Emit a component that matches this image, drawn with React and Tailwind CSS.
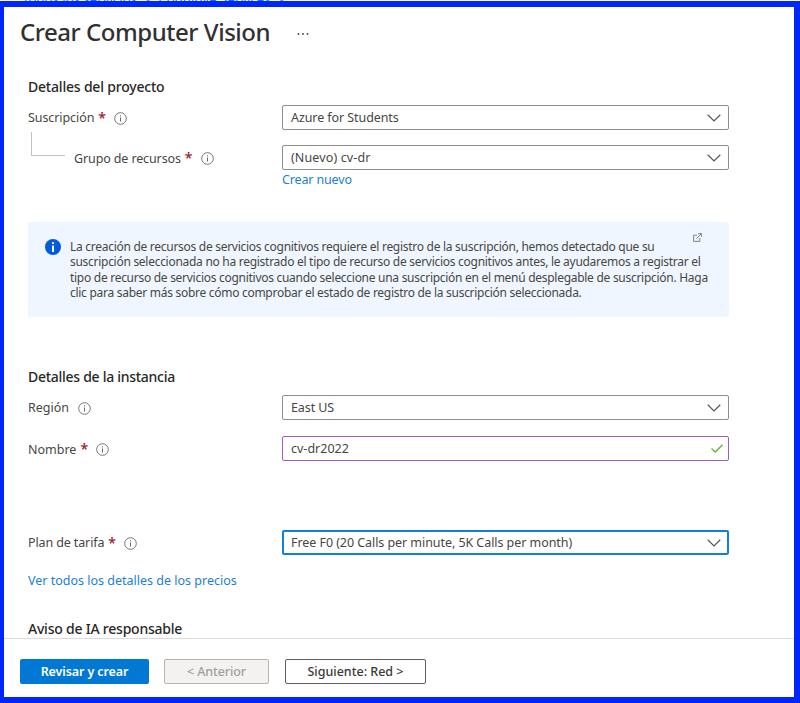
import React from "react";

function InfoIcon() {
  return (
    <svg className="block h-[13px] w-[13px] shrink-0" viewBox="0 0 13 13" fill="none" stroke="#666" aria-hidden="true">
      <circle cx="6.5" cy="6.5" r="5.8" strokeWidth="0.9" />
      <path d="M6.5 5.5v4M6.5 3.4v1.1" strokeWidth="1" />
    </svg>
  );
}

function Chevron() {
  return (
    <svg className="block h-2 w-[14px] shrink-0" viewBox="0 0 14 8" fill="none" stroke="#555" strokeWidth="1.2" aria-hidden="true">
      <path d="M0.7 0.8 7 7 13.3 0.8" />
    </svg>
  );
}

function Label({ text, spacing = "", required, className = "" }) {
  return (
    <div className={"flex h-[25px] items-center whitespace-nowrap " + className}>
      <span className={spacing}>{text}</span>
      {required && <span className="mb-px ml-1 w-[6px] text-[14px] font-semibold text-[#a4262c]">*</span>}
      <span className={required ? "ml-[10px]" : "ml-[9px]"}>
        <InfoIcon />
      </span>
    </div>
  );
}

function Select({ value, spacing = "", active }) {
  return (
    <button
      className={
        "flex h-[25px] w-[447px] shrink-0 items-center justify-between rounded-[2px] bg-white text-left " +
        (active ? "border-2 border-[#1080d8] pr-[6px] pl-[7px]" : "border border-[#8f8e8d] pr-[7px] pl-2")
      }
    >
      <span className={"whitespace-nowrap pt-px " + spacing}>{value}</span>
      <Chevron />
    </button>
  );
}

function Heading({ children, spacing }) {
  return <h2 className={"flex h-5 shrink-0 items-center whitespace-nowrap text-[14px] font-medium text-[#292827] " + spacing}>{children}</h2>;
}

export default function App() {
  return (
    <div className="flex h-[703px] w-[800px] flex-col overflow-hidden bg-white font-['Noto_Sans','Open_Sans',sans-serif] text-[12.5px] leading-4 text-[#484644]">
      <div className="flex h-px shrink-0 items-end overflow-hidden pl-[22px] text-[13px] tracking-[0.1px] whitespace-nowrap text-[#0078d4]">
        <span className="mb-[-6px]">Todos los servicios &nbsp;&gt;&nbsp; Cognitive Services &nbsp;&gt;</span>
      </div>
      <div className="flex h-[702px] flex-col border-t-[6px] border-r-[6px] border-b-[6px] border-l-4 border-[#0026ff]">
        <header className="flex h-[50px] shrink-0 items-center pl-4">
          <h1 className="w-[277px] text-[24px] leading-8 font-[550] tracking-[-0.46px] whitespace-nowrap text-[#323130]">Crear Computer Vision</h1>
          <svg className="mt-[3px] h-1 w-3" viewBox="0 0 12 4" fill="#484644" aria-hidden="true">
            <circle cx="1.5" cy="2" r="0.9" />
            <circle cx="6" cy="2" r="0.9" />
            <circle cx="10.5" cy="2" r="0.9" />
          </svg>
        </header>

        <main className="flex h-[581px] shrink-0 flex-col overflow-hidden pt-5 pl-6">
          <Heading spacing="tracking-[-0.2px]">Detalles del proyecto</Heading>
          <div className="mt-2 flex">
            <Label className="w-[254px] pt-px" text="Suscripción" spacing="tracking-[-0.08px]" required />
            <Select value="Azure for Students" spacing="tracking-[-0.08px]" />
          </div>
          <div className="mt-[2px] flex">
            <div className="ml-[3px] h-6 w-[34px] border-b border-l border-[#c3c2c1]" />
            <Label className="mt-[14px] ml-[9px] w-[208px]" text="Grupo de recursos" spacing="tracking-[-0.12px]" required />
            <div className="mt-[13px]">
              <Select value="(Nuevo) cv-dr" spacing="tracking-[0.12px]" />
              <a className="mt-[2px] block tracking-[-0.15px] text-[#1b80d6]">Crear nuevo</a>
            </div>
          </div>

          <section className="mt-[34px] flex h-[95px] w-[701px] shrink-0 rounded-[2px] bg-[#eff6ff] pt-[17px] pl-[17px]">
            <svg className="h-4 w-4 shrink-0" viewBox="0 0 16 16" aria-hidden="true">
              <circle cx="8" cy="8" r="8" fill="#015cda" />
              <path d="M8 6.5v6.5M8 3.2v1.9" stroke="#fff" strokeWidth="1.9" />
            </svg>
            <p className="ml-[9px] w-[640px] shrink-0 text-[12px] leading-[15.3px] tracking-[-0.28px] whitespace-nowrap">
              La creación de recursos de servicios cognitivos requiere el registro de la suscripción, hemos detectado que su<br />
              suscripción seleccionada no ha registrado el tipo de recurso de servicios cognitivos antes, le ayudaremos a registrar el<br />
              tipo de recurso de servicios cognitivos cuando seleccione una suscripción en el menú desplegable de suscripción. Haga<br />
              clic para saber más sobre cómo comprobar el estado de registro de la suscripción seleccionada.
            </p>
            <svg className="-mt-[6px] -ml-[17px] h-[9px] w-[9px] shrink-0" viewBox="0 0 9 9" fill="none" stroke="#777" strokeWidth="0.9" aria-hidden="true">
              <path d="M4 2.2H.6v6.2h6.2V5M3.4 5.6 8.3.7M5.2.6h3.2v3.2" />
            </svg>
          </section>

          <div className="mt-[50px]">
            <Heading spacing="tracking-[-0.28px]">Detalles de la instancia</Heading>
          </div>
          <div className="mt-2 flex">
            <Label className="w-[254px] pt-px" text="Región" />
            <Select value="East US" spacing="tracking-[-0.1px]" />
          </div>
          <div className="mt-4 flex">
            <Label className="w-[254px] pt-[2px]" text="Nombre" required />
            <div className="flex h-[25px] w-[447px] items-center justify-between rounded-[2px] border border-[#a558bd] pr-[5px] pl-2">
              <span>cv-dr2022</span>
              <svg className="h-[9px] w-3" viewBox="0 0 12 9" fill="none" stroke="#6bb02e" strokeWidth="1.3" aria-hidden="true">
                <path d="M.5 4.5 4.3 8 11.5.7" />
              </svg>
            </div>
          </div>
          <div className="mt-[69px] flex">
            <Label className="w-[254px] pt-px" text="Plan de tarifa" spacing="tracking-[-0.12px]" required />
            <Select value="Free F0 (20 Calls per minute, 5K Calls per month)" spacing="tracking-[-0.06px]" active />
          </div>
          <a className="mt-[18px] block text-[#1b80d6]">Ver todos los detalles de los precios</a>
          <div className="mt-[30px]">
            <Heading spacing="tracking-[-0.22px]">Aviso de IA responsable</Heading>
          </div>
        </main>

        <footer className="flex h-[59px] items-start border-t border-[#dcdbda] pt-5 pl-4 font-semibold tracking-[-0.1px]">
          <button className="h-[25px] w-[129px] rounded-[2px] bg-[#0078d4] text-white">Revisar y crear</button>
          <button className="ml-[15px] h-[25px] w-[105px] rounded-[2px] border border-[#b5b3b1] bg-[#f3f2f1] font-[550] text-[#a19f9d]">&lt; Anterior</button>
          <button className="ml-4 h-[25px] w-[141px] rounded-[2px] border border-[#605e5c] bg-white font-[550] tracking-normal text-[#3b3a39]">Siguiente: Red &gt;</button>
        </footer>
      </div>
    </div>
  );
}
